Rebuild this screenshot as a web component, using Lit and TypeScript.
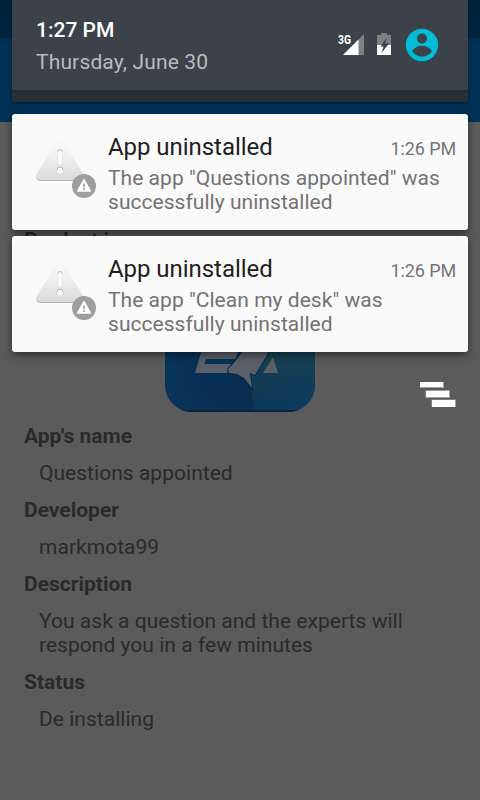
import { LitElement, html, css } from "lit";
import { customElement } from "lit/decorators.js";

@customElement("notification-icon")
class NotificationIcon extends LitElement {
  static styles = css`
    :host { display: block; width: 60px; height: 60px; }
    svg { display: block; }
  `;
  render() {
    return html`<svg width="60" height="60" viewBox="0 0 60 60">
      <defs>
        <linearGradient id="g" x1="0" y1="0" x2="0" y2="1">
          <stop offset="0" stop-color="#fafafa" /><stop offset=".3" stop-color="#f5f5f5" /><stop offset="1" stop-color="#dadada" />
        </linearGradient>
        <linearGradient id="s" x1="0" y1="0" x2="0" y2="1">
          <stop offset=".5" stop-color="#fafafa" /><stop offset="1" stop-color="#b4b4b4" />
        </linearGradient>
      </defs>
      <path d="M21.500 3Q24 0 26.500 3L47 36.500Q49 43 44.500 43H4.500Q-1 43 1 36.500Z" fill="url(#s)" />
      <path d="M21.500 2Q24 -1 26.500 2L47 35.500Q49 42 44.500 42H4.500Q-1 42 1 35.500Z" fill="url(#g)" />
      <rect x="21.700" y="11.500" width="4.600" height="15.500" rx="2.300" fill="#fafafa" stroke="#dedede" stroke-width=".7" />
      <path d="M21.700 13.800a2.300 2.300 0 0 1 4.600 0" fill="none" stroke="#bcbcbc" stroke-width=".9" />
      <circle cx="24" cy="32.500" r="3" fill="#fafafa" />
      <path d="M21 32a3 3 0 0 1 6 0" fill="none" stroke="#b0b0b0" stroke-width=".9" />
      <circle cx="48" cy="48" r="12" fill="#9e9e9e" />
      <path d="M48 41.600L54.500 53H41.500Z" fill="#fff" stroke="#fff" stroke-width="1.300" stroke-linejoin="round" />
      <path d="M47.200 45.500h1.700v3.700h-1.700zM47.200 50.300h1.700v1.600h-1.700z" fill="#9e9e9e" />
    </svg>`;
  }
}

@customElement("app-root")
class AppRoot extends LitElement {
  static styles = css`
    :host { display: block; position: relative; width: 480px; height: 800px; overflow: hidden; background: #5b5b5b; font: 21px/24px Roboto, sans-serif; color: #2a2a2a; }
    .page { height: 800px; }
    .status { height: 38px; background: #00223d; }
    .toolbar { height: 84px; background: #003055; }
    .body { padding: 106px 24px 0; display: flex; flex-direction: column; gap: 13px; }
    .label { font-weight: 700; }
    .value { padding-left: 15px; letter-spacing: .03px; }
    .logo { width: 150px; height: 150px; align-self: center; margin: -3px 0 -1px; }
    .logo svg { display: block; }
    .shade { position: absolute; inset: 0; padding: 0 12px; }
    .header { height: 102px; box-sizing: border-box; background: linear-gradient(#20292d, #263238 7px) 0 90px / 100% 12px no-repeat #263238; border-radius: 0 0 3px 3px; box-shadow: 0 1px 3px rgba(0,0,0,.5); }
    .bar { height: 90px; box-sizing: border-box; background: #3b4249; display: flex; padding: 18px 30px 0 24px; }
    .clock { flex: 1; }
    .time { color: #fff; font-weight: 500; }
    .date { color: #b8bbbd; margin-top: 8px; letter-spacing: .15px; }
    .sys { margin-top: 9px; }
    .cards { margin-top: 12px; display: flex; flex-direction: column; gap: 6px; }
    .card { height: 116px; box-sizing: border-box; background: #fafafa; border-radius: 3px; box-shadow: 0 3px 8px rgba(0,0,0,.5); display: flex; padding: 24px 12px 0 24px; }
    .copy { flex: 1; margin-left: 12px; margin-top: -6px; }
    .head { display: flex; justify-content: space-between; align-items: baseline; line-height: 30px; }
    .title { font-size: 24px; color: #212121; letter-spacing: -.05px; }
    .when { font-size: 18px; color: #757575; letter-spacing: -.12px; }
    .text { color: #737373; margin-top: 2px; white-space: pre-line; letter-spacing: .04px; }
    .clear { display: block; margin: 29px 12px 0 auto; }
    .net { font: 700 12.5px/12px Roboto, sans-serif; }
  `;

  rows: [string, string][] = [
    ["App's name", "Questions appointed"],
    ["Developer", "markmota99"],
    ["Description", "You ask a question and the experts will respond you in a few minutes"],
    ["Status", "De installing"],
  ];
  apps = ["Questions appointed", "Clean my desk"];

  render() {
    return html`
      <div class="page">
        <div class="status"></div>
        <div class="toolbar"></div>
        <div class="body">
          <div class="label">Product image</div>
          <div class="logo">${this.logo()}</div>
          ${this.rows.map(([k, v]) => html`<div class="label">${k}</div><div class="value">${v}</div>`)}
        </div>
      </div>
      <div class="shade">
        <div class="header">
          <div class="bar">
            <div class="clock"><div class="time">1:27 PM</div><div class="date">Thursday, June 30</div></div>
            ${this.system()}
          </div>
        </div>
        <div class="cards">
          ${this.apps.map((a) => html`<div class="card">
            <notification-icon></notification-icon>
            <div class="copy">
              <div class="head"><span class="title">App uninstalled</span><span class="when">1:26 PM</span></div>
              <div class="text">The app "${a}" was${"\n"}successfully uninstalled</div>
            </div>
          </div>`)}
        </div>
        <svg class="clear" width="36" height="27" viewBox="0 0 36 27">
          <g fill="#a0a0a0"><path d="M0 1h24v6H0zM5.500 9h24.500v8H5.500zM11.500 18.500h24.500v7.500h-24.500z" /></g>
          <g fill="#fff"><path d="M0 1h23v5H0zM6 10h23v6H6zM12 19h23v7H12z" /></g>
        </svg>
      </div>`;
  }

  logo() {
    return html`<svg width="150" height="150" viewBox="0 0 150 150">
      <defs>
        <linearGradient id="l" x1="0" y1="0" x2="0" y2="1"><stop offset=".55" stop-color="#07345a" /><stop offset="1" stop-color="#08294b" /></linearGradient>
        <linearGradient id="r" x1="0" y1="0" x2="0" y2="1"><stop offset=".55" stop-color="#16424f" /><stop offset="1" stop-color="#10375a" /></linearGradient>
        <radialGradient id="e" cx=".5" cy=".4" r=".75"><stop offset=".6" stop-color="#0b3d66" stop-opacity="0" /><stop offset="1" stop-color="#0b3d66" stop-opacity=".6" /></radialGradient>
        <clipPath id="c"><rect width="150" height="150" rx="27" /></clipPath>
      </defs>
      <g clip-path="url(#c)">
        <rect width="150" height="150" fill="url(#l)" />
        <path d="M80 80L90 150H150V0H100Z" fill="url(#r)" />
        <rect width="150" height="150" fill="url(#e)" />
        <rect y="148" width="150" height="2" fill="#08233f" />
        <g fill="#5a6069">
          <path d="M38 84H76L70 97H41L39.500 102H66L62 111H30Z" />
          <path d="M82 84H106L102 93L90 113L85 111L87 126L79 116L72 112L64 111L63 107L68 102Z" stroke="#082746" stroke-width="2" paint-order="stroke" />
          <path d="M108 95L113 111H98Z" />
        </g>
      </g>
    </svg>`;
  }

  system() {
    return html`<svg class="sys" width="102" height="36" viewBox="0 0 102 36">
      <path d="M28 7V28H7Z" fill="#7c8184" /><path d="M22.500 12.500V28H7Z" fill="#fff" />
      <rect x="1" y="6" width="14" height="12" fill="#3b4249" />
      <text class="net" x="2" y="16.500" fill="#fff" textLength="13" lengthAdjust="spacingAndGlyphs">3G</text>
      <path d="M41 8h4V6h6v2h4v20H41Z" fill="#7c8184" /><path d="M41 18h14v10H41z" fill="#fff" />
      <path d="M51 10.500L44.500 19.500H47.500L45.500 26L53 16.500H49Z" fill="#3b4249" />
      <circle cx="86" cy="18" r="16.200" fill="#00bcd4" /><circle cx="86" cy="11.500" r="5" fill="#3b4249" />
      <path d="M76 24C81 17 91 17 96 24C91 31.500 81 31.500 76 24Z" fill="#3b4249" />
    </svg>`;
  }
}
